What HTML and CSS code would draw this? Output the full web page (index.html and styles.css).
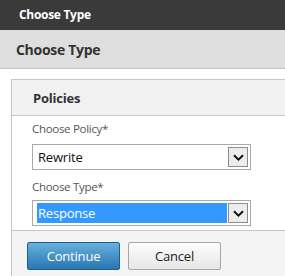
FILE: index.html
```html
<!DOCTYPE html>
<html lang="en">
<head>
    <meta charset="UTF-8">
    <title>Choose Type</title>
    <link rel="stylesheet" href="styles.css">
</head>
<body>

    <!-- Window title -->
    <div class="titlebar">Choose Type</div>

    <!-- Page heading -->
    <div class="page-head">Choose Type</div>

    <!-- Policies panel -->
    <div class="panel">
        <div class="panel-head">Policies</div>

        <div class="panel-body">
            <label class="field-label">Choose Policy*</label>
            <div class="combo">
                <span class="combo-value">Rewrite</span>
                <span class="combo-btn">
                    <svg width="11" height="7" viewBox="0 0 11 7"><path d="M1 1.2 L5.5 5.6 L10 1.2" fill="none" stroke="#111" stroke-width="2"/></svg>
                </span>
            </div>

            <label class="field-label">Choose Type*</label>
            <div class="combo">
                <span class="combo-value selected">Response</span>
                <span class="combo-btn">
                    <svg width="11" height="7" viewBox="0 0 11 7"><path d="M1 1.2 L5.5 5.6 L10 1.2" fill="none" stroke="#111" stroke-width="2"/></svg>
                </span>
            </div>
        </div>

        <div class="panel-foot">
            <button class="btn btn-primary">Continue</button>
            <button class="btn">Cancel</button>
        </div>
    </div>

</body>
</html>
```

FILE: styles.css
```css
* {
    margin: 0;
    padding: 0;
    box-sizing: border-box;
}

body {
    font-family: "Open Sans", Arial, sans-serif;
    background-color: #ffffff;
    color: #333;
    width: 285px;
    height: 276px;
    overflow: hidden;
}

/* Title bar */
.titlebar {
    height: 30px;
    background-color: #3a3a3a;
    color: #fff;
    font-weight: bold;
    font-size: 12px;
    line-height: 30px;
    padding-left: 19px;
    letter-spacing: -0.3px;
}

/* Heading band */
.page-head {
    height: 39px;
    background-color: #dedede;
    border-bottom: 1px solid #c4c4c4;
    font-weight: bold;
    font-size: 14px;
    line-height: 40px;
    padding-left: 16px;
    color: #333;
    letter-spacing: -0.3px;
}

/* Panel */
.panel {
    margin: 10px 0 0 11px;
    border-top: 1px solid #c6c6c6;
    border-left: 1px solid #c6c6c6;
}

.panel-head {
    height: 36px;
    background-color: #f2f2f2;
    border-bottom: 1px solid #c6c6c6;
    font-weight: bold;
    font-size: 13px;
    line-height: 37px;
    padding-left: 21px;
    color: #333;
    letter-spacing: -0.2px;
}

.panel-body {
    padding: 3px 0 4px 20px;
    border-bottom: 1px solid #c6c6c6;
}

.field-label {
    display: block;
    font-size: 11.5px;
    color: #555;
    line-height: 20px;
    margin-bottom: 5px;
    letter-spacing: -0.3px;
}

.combo {
    width: 219px;
    height: 26px;
    border: 1px solid #a9a9a9;
    display: flex;
    align-items: center;
    padding: 2px 2px 2px 4px;
    margin-bottom: 7px;
}

.field-label + .combo + .field-label {
    margin-bottom: 3px;
}

.combo:last-child {
    margin-bottom: 0;
}

.combo-value {
    flex: 1;
    height: 20px;
    font-size: 13px;
    line-height: 20px;
    color: #111;
    padding-left: 1px;
    letter-spacing: -0.2px;
}

.combo-value.selected {
    background-color: #3399ff;
    color: #fff;
}

.combo-btn {
    width: 20px;
    height: 20px;
    margin-left: 1px;
    background-color: #ececec;
    border: 1px solid #8c8c8c;
    display: flex;
    align-items: center;
    justify-content: center;
}

/* Footer buttons */
.panel-foot {
    background-color: #f4f4f4;
    padding: 11px 0 10px 15px;
    display: flex;
    gap: 8px;
}

.btn {
    width: 93px;
    height: 28px;
    font-family: "Open Sans", Arial, sans-serif;
    font-size: 13px;
    color: #222;
    border: 1px solid #a6a6a6;
    border-radius: 2px;
    background: linear-gradient(#fdfdfd, #e6e6e6);
    letter-spacing: -0.2px;
}

.btn-primary {
    color: #fff;
    border-color: #1d5f8e;
    background: linear-gradient(#68b0dc, #2877b2);
}
```
